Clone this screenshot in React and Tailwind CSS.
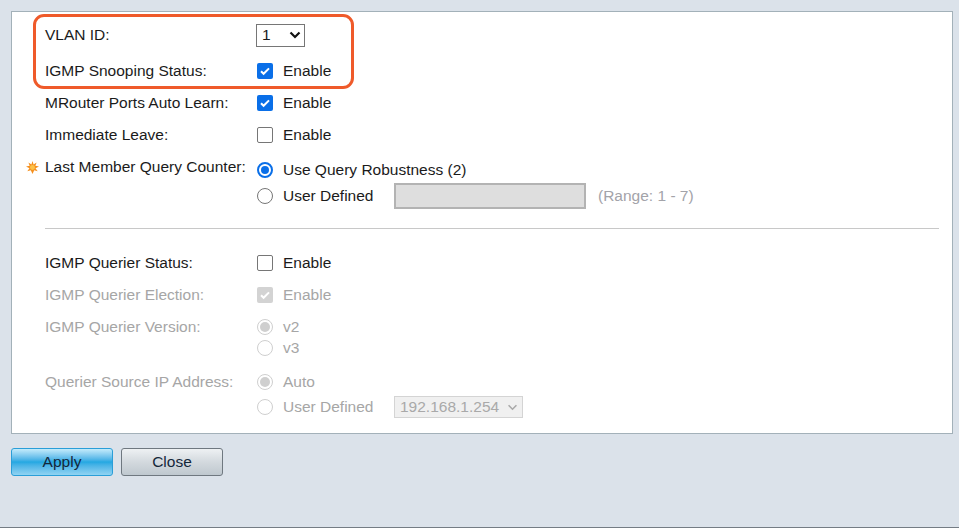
import React from "react";

const Checkbox = ({ checked, disabled }) => {
  if (checked && disabled) {
    return (
      <span className="flex h-[16px] w-[16px] items-center justify-center rounded-[2px] bg-[#d3d3d3]">
        <svg width="12" height="12" viewBox="0 0 12 12">
          <path d="M2 6.2l2.6 2.6L10 3.4" fill="none" stroke="#fff" strokeWidth="2" />
        </svg>
      </span>
    );
  }
  if (checked) {
    return (
      <span className="flex h-[16px] w-[16px] items-center justify-center rounded-[2px] bg-[#0a6fe8]">
        <svg width="12" height="12" viewBox="0 0 12 12">
          <path d="M2 6.2l2.6 2.6L10 3.4" fill="none" stroke="#fff" strokeWidth="2" />
        </svg>
      </span>
    );
  }
  return <span className="block h-[16px] w-[16px] rounded-[2px] border-[1.5px] border-[#767676] bg-white" />;
};

const Radio = ({ checked, disabled }) => {
  if (disabled) {
    return (
      <span className="flex h-[16px] w-[16px] items-center justify-center rounded-full border border-[#cfcfcf] bg-white">
        {checked && <span className="block h-[10px] w-[10px] rounded-full bg-[#cfcfcf]" />}
      </span>
    );
  }
  if (checked) {
    return (
      <span className="flex h-[16px] w-[16px] items-center justify-center rounded-full border-2 border-[#0a6fe8] bg-white">
        <span className="block h-[8px] w-[8px] rounded-full bg-[#0a6fe8]" />
      </span>
    );
  }
  return <span className="block h-[16px] w-[16px] rounded-full border-[1.5px] border-[#767676] bg-white" />;
};

const Star = () => (
  <svg width="13" height="13" viewBox="0 0 12 12">
    <polygon
      points="6,0 7,3.2 9.8,1.4 8.6,4.4 12,5 8.8,6.6 10.8,9.4 7.6,8.6 6,12 4.4,8.6 1.2,9.4 3.2,6.6 0,5 3.4,4.4 2.2,1.4 5,3.2"
      fill="#f5901e"
    />
    <circle cx="6" cy="6" r="2.3" fill="#fcc24a" />
  </svg>
);

function Row({ label, star, disabled, top, children, h = "h-[24px]" }) {
  return (
    <div className={`flex ${top}`}>
      <div className={`flex ${h} w-[19px] shrink-0 items-center`}>{star && <Star />}</div>
      <div className={`flex ${h} w-[211px] shrink-0 items-center ${disabled ? "text-[#a6a6a6]" : "text-[#1b1b1b]"}`}>
        {label}
      </div>
      <div className="flex flex-col">{children}</div>
    </div>
  );
}

function Opt({ control, text, disabled, h = "h-[24px]", extra }) {
  return (
    <div className={`flex ${h} items-center`}>
      <span className="ml-[1px] w-[26px]">{control}</span>
      <span className={`w-[111px] ${disabled ? "text-[#a6a6a6]" : "text-[#1b1b1b]"}`}>{text}</span>
      {extra}
    </div>
  );
}

export default function App() {
  return (
    <div
      className="relative h-[528px] w-[959px] overflow-hidden border-b border-[#747c84] bg-[#dbe2ea] text-[15.5px]"
      style={{ fontFamily: "'Liberation Sans', Arial, sans-serif" }}
    >
      <div className="relative ml-[11px] mr-[6px] mt-[11px] h-[423px] border border-[#a3b1b9] bg-white pl-[14px]">
        {/* highlight annotation */}
        <div className="absolute left-[21px] top-[2px] h-[75px] w-[321px] rounded-[11px] border-[3px] border-[#ef5a2a]" />

        <Row label="VLAN ID:" top="mt-[11px]">
          <div className="flex h-[24px] items-center">
            <div className="flex h-[23px] w-[49px] items-center justify-between border border-[#767676] bg-white pl-[5px] pr-[3px] text-[#1b1b1b]">
              <span>1</span>
              <svg width="12" height="8" viewBox="0 0 12 8">
                <path d="M1.5 1.5L6 6l4.5-4.5" fill="none" stroke="#111" strokeWidth="2.2" />
              </svg>
            </div>
          </div>
        </Row>
        <Row label="IGMP Snooping Status:" top="mt-[12px]">
          <Opt control={<Checkbox checked />} text="Enable" />
        </Row>
        <Row label="MRouter Ports Auto Learn:" top="mt-[8px]">
          <Opt control={<Checkbox checked />} text="Enable" />
        </Row>
        <Row label="Immediate Leave:" top="mt-[8px]">
          <Opt control={<Checkbox />} text="Enable" />
        </Row>
        <Row label="Last Member Query Counter:" star top="mt-[8px]">
          <div className="mt-[3px]">
            <Opt control={<Radio checked />} text={<span className="whitespace-nowrap">Use Query Robustness (2)</span>} />
          </div>
          <div className="mt-[1px]">
            <Opt
              control={<Radio />}
              text="User Defined"
              h="h-[26px]"
              extra={
                <>
                  <div className="h-[26px] w-[192px] border-2 border-[#b3b3b3] bg-[#dedede]" />
                  <span className="ml-[12px] whitespace-nowrap text-[#a3a3a9]">(Range: 1 - 7)</span>
                </>
              }
            />
          </div>
        </Row>

        <div className="ml-[19px] mr-[13px] mt-[19px] h-px bg-[#c8c8c8]" />

        <Row label="IGMP Querier Status:" top="mt-[22px]">
          <Opt control={<Checkbox />} text="Enable" />
        </Row>
        <Row label="IGMP Querier Election:" disabled top="mt-[8px]">
          <Opt control={<Checkbox checked disabled />} text="Enable" disabled />
        </Row>
        <Row label="IGMP Querier Version:" disabled top="mt-[8px]">
          <Opt control={<Radio checked disabled />} text="v2" disabled />
          <Opt control={<Radio disabled />} text="v3" disabled h="h-[18px]" />
        </Row>
        <Row label="Querier Source IP Address:" disabled top="mt-[13px]">
          <Opt control={<Radio checked disabled />} text="Auto" disabled />
          <Opt
            control={<Radio disabled />}
            text="User Defined"
            disabled
            h="h-[26px]"
            extra={
              <div className="flex h-[22px] w-[129px] items-center justify-between border border-[#d4d4d4] bg-[#f0f0f0] pl-[5px] pr-[4px] text-[#a9a9a9]">
                <span>192.168.1.254</span>
                <svg width="11" height="7" viewBox="0 0 12 8">
                  <path d="M1.5 1.5L6 6l4.5-4.5" fill="none" stroke="#a9a9a9" strokeWidth="1.8" />
                </svg>
              </div>
            }
          />
        </Row>
      </div>

      <div className="ml-[11px] mt-[14px] flex gap-[8px]">
        <button className="h-[28px] w-[102px] rounded-[3px] border border-[#2a9ed8] bg-gradient-to-b from-[#c3ebfb] via-[#22a8e2] to-[#8fd3f2] text-[15.5px] text-[#14273a]">
          Apply
        </button>
        <button className="h-[28px] w-[102px] rounded-[3px] border border-[#6f7880] bg-gradient-to-b from-[#eef1f3] via-[#d3d9de] to-[#bfc8cf] text-[15.5px] text-[#14273a]">
          Close
        </button>
      </div>
    </div>
  );
}
